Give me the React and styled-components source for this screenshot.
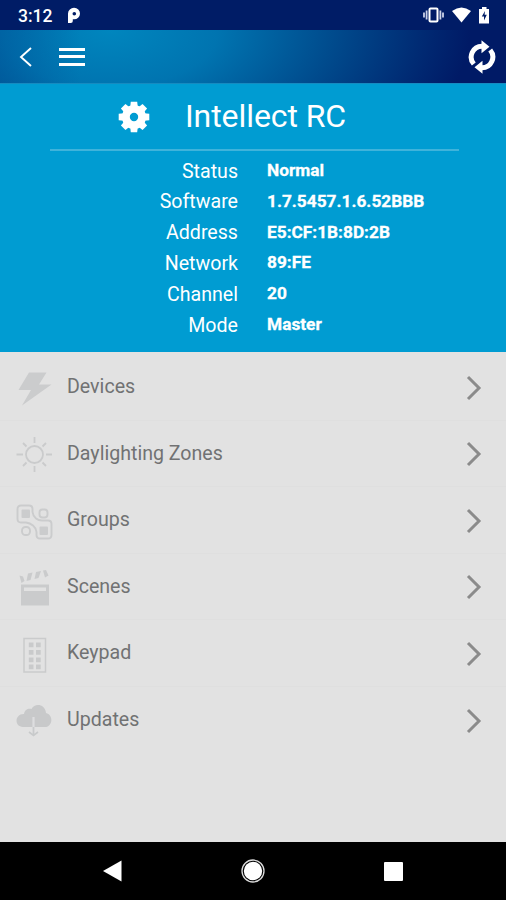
import React from 'react';
import styled, { createGlobalStyle } from 'styled-components';

const details = [
  { label: 'Status', value: 'Normal' },
  { label: 'Software', value: '1.7.5457.1.6.52BBB' },
  { label: 'Address', value: 'E5:CF:1B:8D:2B' },
  { label: 'Network', value: '89:FE' },
  { label: 'Channel', value: '20' },
  { label: 'Mode', value: 'Master' },
];

const BoltIcon = () => (
  <svg width="40" height="40" viewBox="0 0 40 40">
    <path d="M15 4.500H32.500L25 16.500H37.500L8 37.500L17 22H4.500Z" fill="#cbcccd" />
  </svg>
);

const SunIcon = () => (
  <svg width="40" height="40" viewBox="0 0 40 40" fill="none" stroke="#cacbcc" strokeWidth="1.800">
    <circle cx="20.500" cy="20.500" r="8.500" />
    <path d="M20.500 3V9M20.500 32v6M2.500 20.500H9M32 20.500h6M9 9l3.500 3.500M32 9l-3.500 3.500M9 32l3.500-3.500M32 32l-3.500-3.500" />
  </svg>
);

const GroupsIcon = () => (
  <svg width="40" height="40" viewBox="0 0 40 40" fill="none" stroke="#cbcccd" strokeWidth="1.900">
    <path d="M7 4.500H15Q18.500 4.500 18.500 8V11Q19 15 22 17.500Q24.500 19.500 28 19.500H34Q37.500 19.500 37.500 23V34Q37.500 37.500 34 37.500H26Q22.500 37.500 22.500 34V31Q22 27 19 24.500Q16 22 12 21.500H7Q3.500 21.500 3.500 18V8Q3.500 4.500 7 4.500Z" />
    <rect x="25.500" y="8.500" width="8" height="8" rx="3" />
    <rect x="8" y="26" width="8" height="8" rx="3.500" />
    <rect x="7.500" y="8.500" width="8.500" height="8.500" rx="1" fill="#cbcccd" stroke="none" />
    <rect x="25.500" y="25.500" width="8.500" height="8.500" rx="1" fill="#cbcccd" stroke="none" />
  </svg>
);

const ScenesIcon = () => (
  <svg width="40" height="40" viewBox="0 0 40 40" fill="#cacbcc">
    <path fillRule="evenodd" d="M7 17.500H35V38.500H7ZM10 20.500V24H32V20.500Z" />
    <path d="M5.500 8.500L9 9.500L10.500 14L7.500 16ZM14 6.500L18.500 5.500L16.500 13L12.500 14ZM22 5L27 4L24.500 11L20.500 12ZM29 3.500L32 3L34.500 8.500L31 10.500Z" />
  </svg>
);

const KeypadIcon = () => (
  <svg width="40" height="40" viewBox="0 0 40 40">
    <rect x="10" y="4.500" width="21.500" height="33.500" fill="none" stroke="#cacbcc" strokeWidth="1.500" />
    {[8.5, 16, 23.5, 30.5].map((y) => (
      <path key={y} d={`M14.800 ${y}h4.700v4.700h-4.700zM22 ${y}h4.700v4.700h-4.700z`} fill="#c9cacb" />
    ))}
  </svg>
);

const CloudIcon = () => (
  <svg width="40" height="40" viewBox="0 0 40 40">
    <path d="M9 26C-0.500 25.500 1 12.500 10 13C10.500 8 15 7 17.500 8C20.500 2 31 2.500 32 12C40 14 38.500 26 31 26Z" fill="#c8c9ca" />
    <path d="M19.500 16V32" stroke="#dddedf" strokeWidth="2.200" />
    <path d="M19.500 26V34M15 31L19.500 34.500L24 31" fill="none" stroke="#c8cacb" strokeWidth="1.600" />
  </svg>
);

const menu = [
  { name: 'Devices', Icon: BoltIcon },
  { name: 'Daylighting Zones', Icon: SunIcon },
  { name: 'Groups', Icon: GroupsIcon },
  { name: 'Scenes', Icon: ScenesIcon },
  { name: 'Keypad', Icon: KeypadIcon },
  { name: 'Updates', Icon: CloudIcon },
];

function StatusBar() {
  return (
    <StatusWrapper>
      <Clock>3:12</Clock>
      <svg width="14" height="18" viewBox="0 0 14 18">
        <path
          fillRule="evenodd"
          d="M1 17V7.500A6 5.800 0 0 1 13 7.700A5.800 5.800 0 0 1 7 13.300H5.800V15Q5.800 17 3.800 17ZM5.500 7.700A1.800 1.800 0 1 0 9.100 7.700A1.800 1.800 0 1 0 5.500 7.700Z"
          fill="#fff"
        />
      </svg>
      <StatusIcons>
        <svg width="21" height="18" viewBox="0 0 21 18">
          <rect x="6.500" y="2.500" width="8" height="13" rx="1" fill="none" stroke="#fff" strokeWidth="2" />
          <path d="M1 6.500V11.500M3.600 4.500V13.500M17.400 4.500V13.500M20 6.500V11.500" stroke="#cbd2e8" strokeWidth="1.800" />
        </svg>
        <svg width="19" height="18" viewBox="0 0 19 18">
          <path d="M0 5Q9.500 -2 19 5L9.500 16.500Z" fill="#fff" />
        </svg>
        <svg width="10" height="18" viewBox="0 0 10 18">
          <path d="M0 3H3V1H7.500V3H10.500V17.500H0Z" fill="#fff" />
          <path d="M6 5L2.800 10.500H5V14.500L7.800 8.800H5.600Z" fill="#001d66" />
        </svg>
      </StatusIcons>
    </StatusWrapper>
  );
}

function Toolbar() {
  return (
    <ToolbarWrapper>
      <svg width="14" height="22" viewBox="0 0 14 22">
        <path d="M12 2L2 11L12 20" fill="none" stroke="#fff" strokeWidth="1.900" />
      </svg>
      <MenuButton>
        <span />
        <span />
        <span />
      </MenuButton>
      <RefreshIcon width="28" height="36" viewBox="0 0 28 36" fill="none">
        <path d="M5.800 25A10.800 10.800 0 0 1 14 7.200M22.200 11A10.800 10.800 0 0 1 14 28.800" stroke="#fff" strokeWidth="5" />
        <path d="M13.500 1.200L21.500 7.700L13.500 14.200ZM14.500 21.800L6.500 28.300L14.500 34.800Z" fill="#fff" />
      </RefreshIcon>
    </ToolbarWrapper>
  );
}

function App() {
  return (
    <Screen>
      <GlobalStyle />
      <StatusBar />
      <Toolbar />
      <Panel>
        <PanelTitle>
          <svg width="32" height="32" viewBox="-16 -16 32 32" fill="#fff">
            <path fillRule="evenodd" d="M0 -12A12 12 0 1 1 0 12A12 12 0 1 1 0 -12ZM0 -4.200A4.200 4.200 0 1 0 0 4.200A4.200 4.200 0 1 0 0 -4.200Z" />
            {[0, 45, 90, 135, 180, 225, 270, 315].map((angle) => (
              <path key={angle} d="M-3.800 -10L-3.200 -15.300H3.200L3.800 -10Z" transform={`rotate(${angle})`} />
            ))}
          </svg>
          <h1>Intellect RC</h1>
        </PanelTitle>
        <Details>
          {details.map(({ label, value }) => (
            <DetailRow key={label}>
              <dt>{label}</dt>
              <dd>{value}</dd>
            </DetailRow>
          ))}
        </Details>
      </Panel>
      <Menu>
        {menu.map(({ name, Icon }) => (
          <MenuItem key={name}>
            <Icon />
            <MenuLabel>{name}</MenuLabel>
            <svg width="16" height="26" viewBox="0 0 16 26">
              <path d="M2 2L13 13L2 24" fill="none" stroke="#8b8b8b" strokeWidth="3" />
            </svg>
          </MenuItem>
        ))}
      </Menu>
      <NavBar>
        <svg width="20" height="22" viewBox="0 0 20 22">
          <path d="M1 11L19.500 .5V21.500Z" fill="#fff" />
        </svg>
        <svg width="24" height="24" viewBox="0 0 24 24">
          <circle cx="12" cy="12" r="11" fill="none" stroke="#ddd" strokeWidth="1.300" />
          <circle cx="12" cy="12" r="9.200" fill="#fff" />
        </svg>
        <Recents />
      </NavBar>
    </Screen>
  );
}

const GlobalStyle = createGlobalStyle`
    * {
        box-sizing: border-box;
    }

    body {
        margin: 0;
        font-family: Roboto, sans-serif;
        background: #000;
    }

    svg {
        display: block;
        flex-shrink: 0;
    }
`;

const Screen = styled.div`
    display: flex;
    flex-direction: column;
    width: 506px;
    height: 900px;
    overflow: hidden;
`;

const StatusWrapper = styled.header`
    display: flex;
    align-items: center;
    height: 30px;
    padding: 0 17px 0 18px;
    background: #001c66;
    color: #fff;
`;

const Clock = styled.span`
    width: 49px;
    padding-top: 2px;
    font-size: 17.5px;
    font-weight: 500;
    line-height: 30px;
`;

const StatusIcons = styled.div`
    display: flex;
    align-items: center;
    gap: 8px;
    margin-left: auto;
`;

const ToolbarWrapper = styled.nav`
    display: flex;
    align-items: center;
    height: 53px;
    padding: 0 10px 0 19px;
    background:
        linear-gradient(to right, rgba(0, 75, 145, 0.4), rgba(0, 75, 145, 0) 80px),
        radial-gradient(ellipse 360px 190px at 110px 0, #0086be 0%, #0074b0 30%, #004b8d 62%, #002670 90%, #001a66 100%);
`;

const MenuButton = styled.div`
    display: flex;
    flex-direction: column;
    gap: 4.5px;
    width: 26px;
    margin-left: 26px;

    span {
        height: 3px;
        background: #fff;
    }
`;

const RefreshIcon = styled.svg`
    margin-left: auto;
`;

const Panel = styled.section`
    height: 269px;
    padding: 0 47px 0 50px;
    border-top: 1px solid #168bc0;
    background: #009cd2;
    color: #fff;
`;

const PanelTitle = styled.div`
    display: flex;
    align-items: center;
    height: 67px;
    padding: 1px 0 0 68px;
    border-bottom: 2px solid #3fb3db;

    h1 {
        margin: 0 0 3px 35px;
        font-size: 32px;
        font-weight: 400;
        line-height: 40px;
        letter-spacing: -0.08px;
    }
`;

const Details = styled.dl`
    margin: 4px 0 0;
`;

const DetailRow = styled.div`
    display: grid;
    grid-template-columns: 188px 1fr;
    column-gap: 29px;
    height: 30.8px;
    line-height: 31px;

    dt {
        padding-top: 0.6px;
        font-size: 19.6px;
        text-align: right;
    }

    dd {
        margin: 0;
        font-size: 17.3px;
        font-weight: 700;
        -webkit-text-stroke: 0.3px #fff;
    }
`;

const Menu = styled.main`
    flex: 1;
    padding-top: 2px;
    background: #e2e2e2;
`;

const MenuItem = styled.div`
    display: flex;
    align-items: center;
    height: 66.5px;
    padding: 2px 24px 0 14px;
    border-bottom: 1px solid #dfdfdf;

    &:last-child {
        border-bottom: none;
    }
`;

const MenuLabel = styled.span`
    flex: 1;
    margin: 0 0 1px 13px;
    color: #717273;
    font-size: 19.6px;
    line-height: 26px;
`;

const NavBar = styled.footer`
    display: flex;
    align-items: center;
    justify-content: space-between;
    height: 58px;
    padding: 0 103px 0 102px;
    background: #000;
`;

const Recents = styled.div`
    width: 19px;
    height: 19px;
    border-radius: 1px;
    background: #fff;
`;

export default App;
